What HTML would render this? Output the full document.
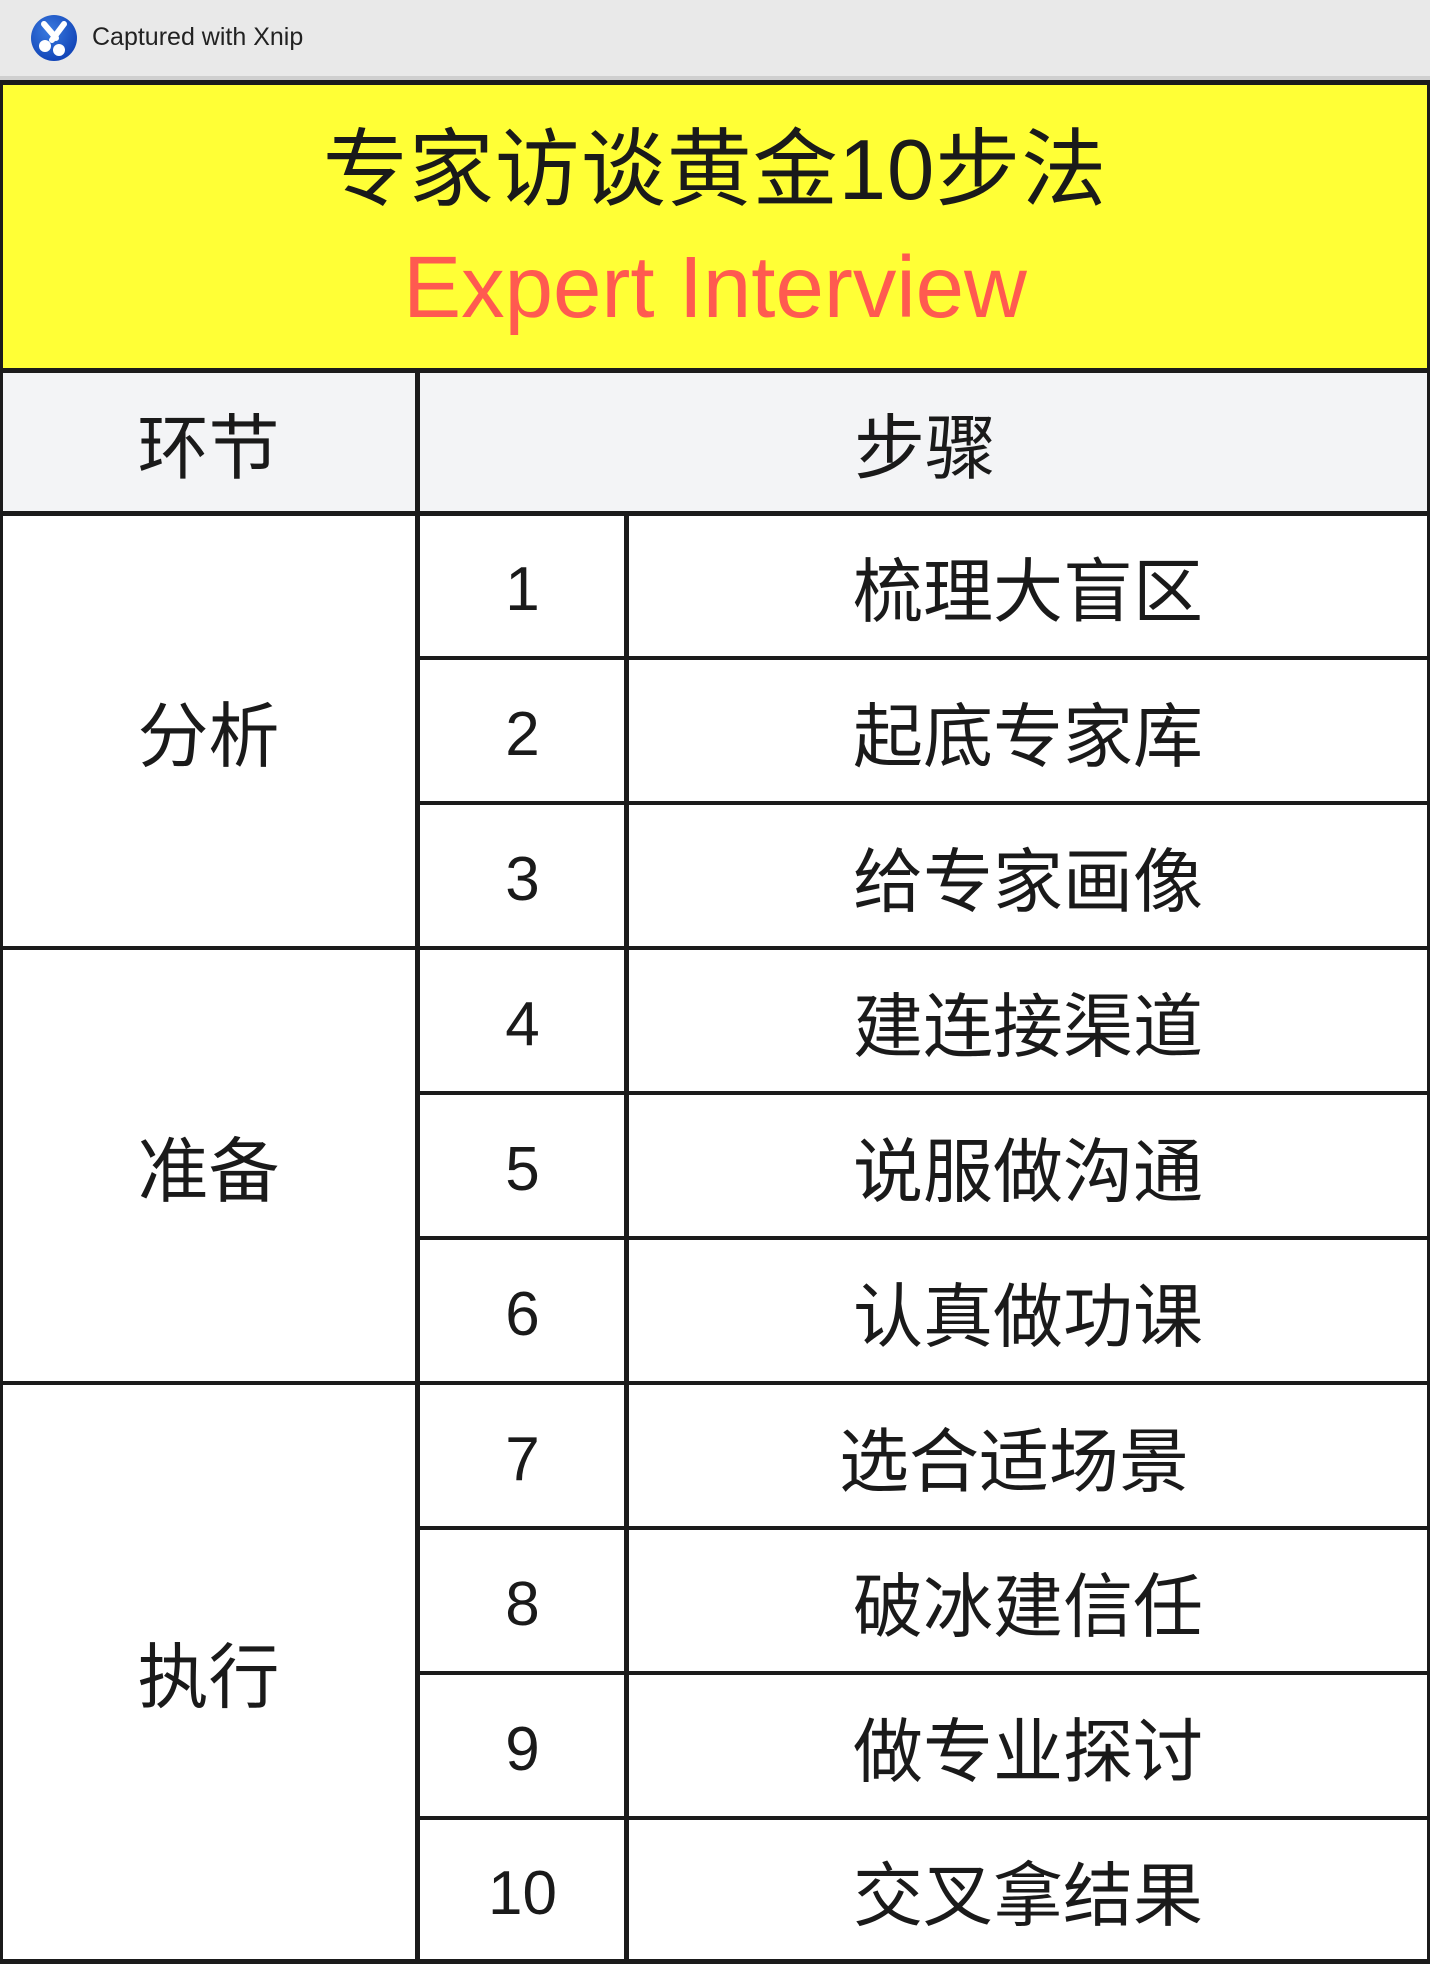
<!DOCTYPE html>
<html><head><meta charset="utf-8"><style>
body{margin:0;width:1430px;height:1964px;overflow:hidden;background:#fff;position:relative;font-family:"Liberation Sans","Noto Sans CJK SC",sans-serif;}
.a{position:absolute;}
.h{position:absolute;background:#1b1b1b;}
.t{position:absolute;display:flex;align-items:center;justify-content:center;color:#1a1a1a;}
.n{font-size:62px;padding-top:6px;box-sizing:border-box;}
.c{font-size:70px;}
.l{font-size:71px;}
</style></head><body>
<div class="a" style="left:0;top:0;width:1430px;height:76px;background:#e9e9e9"></div>
<div class="a" style="left:0;top:76px;width:1430px;height:4px;background:#cfcfcf"></div>
<svg class="a" style="left:30px;top:14px" width="48" height="48" viewBox="0 0 48 48">
<defs><radialGradient id="g" cx="40%" cy="35%" r="65%"><stop offset="0" stop-color="#3a7be0"/><stop offset="1" stop-color="#1346b8"/></radialGradient></defs>
<circle cx="24" cy="24" r="23" fill="url(#g)"/>
<path d="M14 10 L26 24 M34 10 L22 26" stroke="#fff" stroke-width="6" stroke-linecap="round"/>
<circle cx="15" cy="32" r="6" fill="#fff"/><circle cx="29" cy="36" r="6" fill="#fff"/>
</svg>
<div class="a" style="left:92px;top:23px;font-size:25px;color:#222;">Captured with Xnip</div>

<div class="a" style="left:0;top:84px;width:1430px;height:284px;background:#ffff36"></div>
<div class="a" style="left:0;top:373px;width:1430px;height:140px;background:#f3f4f6"></div>

<div class="t" style="left:0;top:112px;width:1430px;height:100px;font-size:85px;letter-spacing:1px;">专家访谈黄金10步法</div>
<div class="t" style="left:0;top:238px;width:1430px;height:100px;font-size:87px;color:#ff5a50;">Expert Interview</div>

<div class="h" style="left:0;top:80px;width:1430px;height:5px"></div>
<div class="h" style="left:0;top:368px;width:1430px;height:5px"></div>
<div class="h" style="left:0;top:511px;width:1430px;height:5px"></div>
<div class="h" style="left:417px;top:656px;width:1013px;height:4px"></div>
<div class="h" style="left:417px;top:801px;width:1013px;height:4px"></div>
<div class="h" style="left:0;top:946px;width:1430px;height:4px"></div>
<div class="h" style="left:417px;top:1091px;width:1013px;height:4px"></div>
<div class="h" style="left:417px;top:1236px;width:1013px;height:4px"></div>
<div class="h" style="left:0;top:1381px;width:1430px;height:4px"></div>
<div class="h" style="left:417px;top:1526px;width:1013px;height:4px"></div>
<div class="h" style="left:417px;top:1671px;width:1013px;height:4px"></div>
<div class="h" style="left:417px;top:1816px;width:1013px;height:4px"></div>
<div class="h" style="left:0;top:1959px;width:1430px;height:5px"></div>
<div class="h" style="left:0;top:80px;width:3px;height:1884px"></div>
<div class="h" style="left:1427px;top:80px;width:3px;height:1884px"></div>
<div class="h" style="left:415px;top:370px;width:5px;height:1594px"></div>
<div class="h" style="left:624px;top:513px;width:5px;height:1451px"></div>

<div class="t l" style="left:0;top:373px;width:417px;height:140px;">环节</div>
<div class="t l" style="left:420px;top:373px;width:1010px;height:140px;">步骤</div>

<div class="t l" style="left:0;top:513px;width:417px;height:435px;">分析</div>
<div class="t l" style="left:0;top:948px;width:417px;height:435px;">准备</div>
<div class="t l" style="left:0;top:1383px;width:417px;height:578px;">执行</div>

<div class="t n" style="left:420px;top:515px;width:205px;height:143px;">1</div>
<div class="t n" style="left:420px;top:660px;width:205px;height:143px;">2</div>
<div class="t n" style="left:420px;top:805px;width:205px;height:143px;">3</div>
<div class="t n" style="left:420px;top:950px;width:205px;height:143px;">4</div>
<div class="t n" style="left:420px;top:1095px;width:205px;height:143px;">5</div>
<div class="t n" style="left:420px;top:1240px;width:205px;height:143px;">6</div>
<div class="t n" style="left:420px;top:1385px;width:205px;height:143px;">7</div>
<div class="t n" style="left:420px;top:1530px;width:205px;height:143px;">8</div>
<div class="t n" style="left:420px;top:1675px;width:205px;height:143px;">9</div>
<div class="t n" style="left:420px;top:1820px;width:205px;height:141px;">10</div>

<div class="t c" style="left:629px;top:515px;width:798px;height:143px;">梳理大盲区</div>
<div class="t c" style="left:629px;top:660px;width:798px;height:143px;">起底专家库</div>
<div class="t c" style="left:629px;top:805px;width:798px;height:143px;">给专家画像</div>
<div class="t c" style="left:629px;top:950px;width:798px;height:143px;">建连接渠道</div>
<div class="t c" style="left:629px;top:1095px;width:798px;height:143px;">说服做沟通</div>
<div class="t c" style="left:629px;top:1240px;width:798px;height:143px;">认真做功课</div>
<div class="t c" style="left:615px;top:1385px;width:798px;height:143px;">选合适场景</div>
<div class="t c" style="left:629px;top:1530px;width:798px;height:143px;">破冰建信任</div>
<div class="t c" style="left:629px;top:1675px;width:798px;height:143px;">做专业探讨</div>
<div class="t c" style="left:629px;top:1820px;width:798px;height:141px;">交叉拿结果</div>
</body></html>
